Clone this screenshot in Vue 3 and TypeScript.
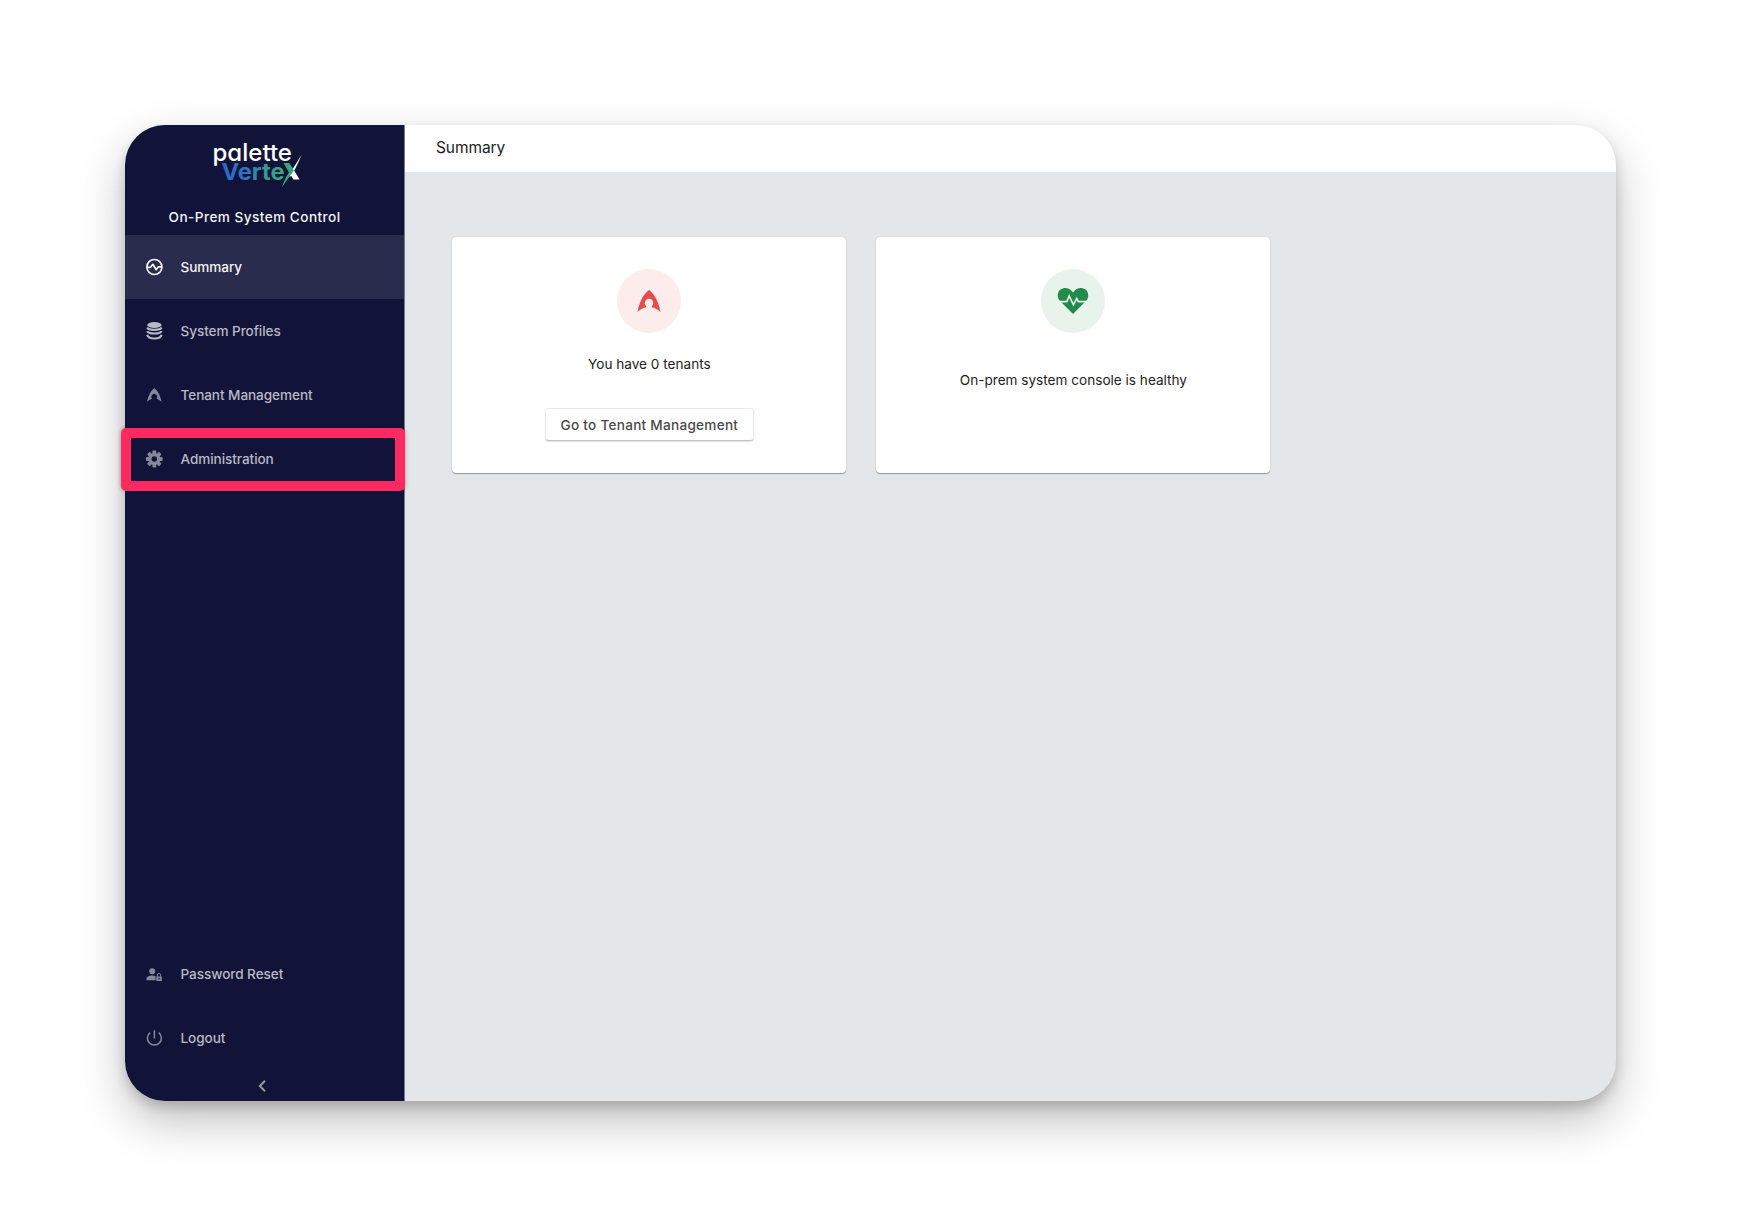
<script setup lang="ts">
interface NavItem {
  icon: string
  label: string
  active?: boolean
  highlighted?: boolean
}

const mainItems: NavItem[] = [
  { icon: 'pulse', label: 'Summary', active: true },
  { icon: 'stack', label: 'System Profiles' },
  { icon: 'tenant', label: 'Tenant Management' },
  { icon: 'gear', label: 'Administration', highlighted: true },
]
const footerItems: NavItem[] = [
  { icon: 'userlock', label: 'Password Reset' },
  { icon: 'power', label: 'Logout' },
]

const gearTeeth = [0, 45, 90, 135, 180, 225, 270, 315]
</script>

<template>
  <div class="page">
    <div class="window">
      <aside class="sidebar">
        <div class="brand">
          <svg class="logo" width="96" height="58" viewBox="0 0 96 58">
            <defs>
              <linearGradient id="vertex" gradientUnits="userSpaceOnUse" x1="11" y1="0" x2="74" y2="0">
                <stop offset="0" stop-color="#2d68ce" />
                <stop offset="0.35" stop-color="#2e6fc6" />
                <stop offset="0.7" stop-color="#349b95" />
                <stop offset="1" stop-color="#36a77d" />
              </linearGradient>
            </defs>
            <text x="2.500" y="28.500" class="word" textLength="79.500" lengthAdjust="spacingAndGlyphs">palette</text>
            <text x="11.500" y="47.500" class="word bold" textLength="63" lengthAdjust="spacingAndGlyphs">Verte</text>
            <path d="M73.500 31h5.800l4.800 7.500-3.800 4.300z" fill="#36a77d" />
            <path d="M89.500 47.500h-6l-3.300-5.200 3.700-4.300z" fill="#fff" />
            <path d="M91.500 23C87.500 32.500 84 40 80 45l-1-2.800C83.500 36 87.500 29.500 91.500 23z" fill="#fff" />
            <path d="M71.800 55.500C74.500 47.500 77.500 41.500 82.500 36l1.400 2.600C79.500 44.500 76.500 49 71.800 55.500z" fill="#36a77d" />
          </svg>
          <div class="product">On-Prem System Control</div>
        </div>

        <nav v-for="(group, g) in [mainItems, footerItems]" :key="g" class="nav">
          <a
            v-for="item in group"
            :key="item.label"
            class="item"
            :class="{ active: item.active, highlighted: item.highlighted }"
          >
            <svg class="icon" :class="item.icon" width="18" height="20" viewBox="0 0 18 20">
              <g v-if="item.icon === 'pulse'" fill="none" stroke="currentColor" stroke-width="1.700" stroke-linejoin="round">
                <circle cx="9.400" cy="10" r="7.500" />
                <path d="M1.900 10.300H5.400l2.500-3 3.300 5.400 2.200-2.800h3.500" />
              </g>
              <g v-else-if="item.icon === 'stack'" fill="currentColor">
                <ellipse cx="9.400" cy="4" rx="7.200" ry="3" />
                <g fill="none" stroke="currentColor" stroke-width="2.100">
                  <path d="M2.200 6.500C3.400 9.600 15.400 9.600 16.600 6.500" />
                  <path d="M2.200 10.100C3.400 13.300 15.400 13.300 16.600 10.100" />
                  <path d="M2.200 13.700C3.400 18.700 15.400 18.700 16.600 13.700" />
                </g>
              </g>
              <path
                v-else-if="item.icon === 'tenant'"
                fill="currentColor"
                d="M9.300 3C13.300 6.100 15.400 11 16.700 17c-1.400-1.400-3.300-2.500-5.300-3.200a2.850 2.850 0 1 0-4.200 0c-2 .7-3.900 1.800-5.300 3.200C3.200 11 5.300 6.100 9.300 3z"
              />
              <g v-else-if="item.icon === 'gear'">
                <circle cx="9.300" cy="10" r="4.400" fill="none" stroke="currentColor" stroke-width="3.400" />
                <rect
                  v-for="t in gearTeeth"
                  :key="t"
                  x="7.400"
                  y="1.600"
                  width="3.800"
                  height="3.400"
                  rx="0.800"
                  fill="currentColor"
                  :transform="`rotate(${t} 9.300 10)`"
                />
              </g>
              <g v-else-if="item.icon === 'userlock'" fill="currentColor">
                <circle cx="7.200" cy="7.200" r="3" />
                <path d="M1.500 16.300v-1.500c0-2.300 3-3.300 5.900-3.300 1.200 0 2.300.2 3.200.6v4.200z" />
                <path d="M11.300 12.500h5.500v4.500h-5.500z" />
                <path d="M12.400 12.700v-1.700a1.600 1.600 0 0 1 3.200 0v1.700" fill="none" stroke="currentColor" stroke-width="1" />
                <circle cx="14" cy="14.700" r="0.800" fill="#111438" />
              </g>
              <g v-else fill="none" stroke="currentColor" stroke-width="1.500">
                <path d="M9.400 2.300v8.200" />
                <path d="M5.100 4.600a7 7 0 1 0 8.600 0" />
              </g>
            </svg>
            <span class="label">{{ item.label }}</span>
          </a>
        </nav>
        <div class="collapse">
          <svg width="10" height="14" viewBox="0 0 10 14">
            <path d="M8 1.700L2.800 7l5.200 5.300" fill="none" stroke="currentColor" stroke-width="2" />
          </svg>
        </div>
      </aside>

      <main class="main">
        <header class="header">Summary</header>
        <section class="cards">
          <article class="card">
            <div class="badge danger">
              <svg width="24" height="24" viewBox="0 0 24 24">
                <path
                  fill="currentColor"
                  d="M12 1C17.500 5 21.800 13 23.500 23.200c-2-2.200-5-4-8.700-4.900v-1.200a4.200 4.200 0 1 0-5.600 0v1.200C5.500 19.200 2.500 21 .5 23.200 2.200 13 6.500 5 12 1z"
                />
              </svg>
            </div>
            <p>You have 0 tenants</p>
            <button class="button" type="button">Go to Tenant Management</button>
          </article>
          <article class="card healthy">
            <div class="badge success">
              <svg width="32" height="28" viewBox="0 0 32 28">
                <path
                  fill="currentColor"
                  d="M16 27L2.300 13.200C-.2 9.600.5 4.800 3.500 2.600 7-.1 11.800.6 14.500 3.700L16 5.400l1.500-1.700c2.700-3.100 7.500-3.800 11-1.100 3 2.200 3.700 7 1.200 10.600z"
                />
                <path d="M.500 14.600h9.300l2.400-5.700 4.200 8.900 3.300-6.400 1.700 3.200h10.100" fill="none" stroke="#e8f3eb" stroke-width="1.600" />
              </svg>
            </div>
            <p>On-prem system console is healthy</p>
          </article>
        </section>
      </main>
    </div>
  </div>
</template>

<style>
body {
  background: #fff;
}
</style>

<style scoped>
.page {
  box-sizing: border-box;
  width: 1741px;
  height: 1226px;
  padding: 125px;
  overflow: hidden;
  font-family: Inter, 'Liberation Sans', sans-serif;
  font-size: 13.600px;
  color: #222;
}
.window {
  display: flex;
  width: 1491px;
  height: 976px;
  border-radius: 40px;
  background: #e3e7ea;
  box-shadow: 0 20px 46px rgba(0, 0, 0, 0.25), 0 6px 12px rgba(0, 0, 0, 0.17);
}
.sidebar {
  box-sizing: border-box;
  display: flex;
  flex-direction: column;
  width: 280px;
  height: 976px;
  border-right: 1px solid #777a8f;
  border-radius: 40px 0 0 40px;
  background: #111438;
  color: #b8b9c3;
}
.brand {
  display: flex;
  flex-direction: column;
  height: 110px;
}
.logo {
  margin: 7px 0 0 85px;
}
.word {
  font-family: Inter, sans-serif;
  font-size: 24px;
  font-weight: 500;
  font-feature-settings: 'cv11';
  fill: #fff;
}
.word.bold {
  font-size: 22.500px;
  font-weight: 700;
  fill: url(#vertex);
}
.product {
  margin: 17px 0 0 43.500px;
  line-height: 20px;
  font-weight: 500;
  letter-spacing: 0.460px;
  color: #f4f4f6;
}
.nav {
  display: flex;
  flex-direction: column;
}
.nav + .nav {
  margin-top: auto;
}
.item {
  position: relative;
  display: flex;
  align-items: center;
  gap: 17.500px;
  height: 64px;
  padding-left: 20px;
  font-weight: 500;
}
.label {
  letter-spacing: -0.080px;
}
.item.active {
  background: #292c4c;
  color: #f4f4f6;
}
.item.highlighted::after {
  content: '';
  position: absolute;
  left: -4px;
  top: 1px;
  box-sizing: border-box;
  width: 284px;
  height: 63px;
  border: 10px solid #ff2961;
  border-radius: 5px;
  box-shadow: 0 0 4px rgba(0, 0, 0, 0.35);
}
.tenant,
.gear,
.userlock,
.power {
  color: #85879b;
}
.collapse {
  display: flex;
  align-items: center;
  height: 31px;
  padding-left: 132px;
  color: #9495a6;
}
.main {
  flex: 1;
}
.header {
  box-sizing: border-box;
  display: flex;
  align-items: center;
  height: 47px;
  padding: 0 31px 3px;
  border-radius: 0 40px 0 0;
  background: #fff;
  font-size: 15.500px;
  letter-spacing: -0.080px;
}
.cards {
  display: flex;
  gap: 30px;
  padding: 65px 47.400px 0;
}
.card {
  box-sizing: border-box;
  display: flex;
  flex-direction: column;
  align-items: center;
  width: 394px;
  height: 236px;
  padding-top: 32px;
  border-radius: 4px;
  background: #fff;
  box-shadow: 0 1px 1px rgba(40, 50, 50, 0.42), 0 0 1px rgba(40, 50, 50, 0.3);
}
.card p {
  margin: 21px 0 0;
  line-height: 20px;
}
.card.healthy p {
  margin-top: 37px;
}
.badge {
  display: flex;
  align-items: center;
  justify-content: center;
  width: 64px;
  height: 64px;
  border-radius: 50%;
}
.danger {
  background: #fdecec;
  color: #e94b4b;
}
.success {
  background: #e8f3eb;
  color: #218c47;
}
.button {
  width: 209px;
  height: 33px;
  margin-top: 34px;
  padding: 1px 0 0;
  border: 1px solid #e9e9e9;
  border-bottom-color: #c4c6c6;
  border-radius: 4px;
  background: #fff;
  box-shadow: 0 1px 1px rgba(0, 0, 0, 0.12);
  font: inherit;
  font-weight: 500;
  letter-spacing: 0.260px;
  color: #4a4a4a;
}
</style>
